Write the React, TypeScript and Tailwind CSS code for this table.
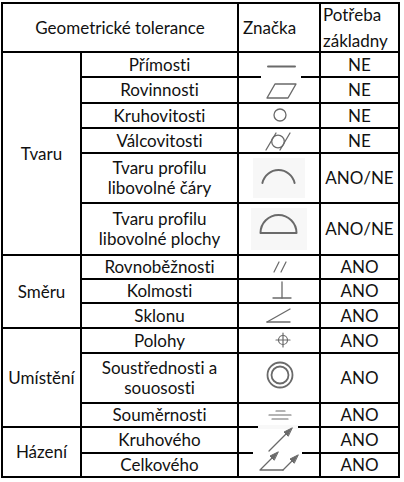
import type { ReactNode } from "react";

const stroke = "#6a6a6a";

const Cell = ({ children, className = "" }: { children?: ReactNode; className?: string }) => (
  <div className={`bg-white flex items-center justify-center text-center ${className}`}>{children}</div>
);

const Sym = ({ children, h, className = "" }: { children: ReactNode; h: number; className?: string }) => (
  <div className={`bg-white relative ${className}`}>
    <svg width={80} height={h} viewBox={`0 0 80 ${h}`} className="absolute left-0 top-0 overflow-visible" fill="none" stroke={stroke} strokeLinecap="round">
      {children}
    </svg>
  </div>
);

export default function App() {
  return (
    <div className="bg-white w-[404px] h-[482px] font-['Lato',_sans-serif] text-[17px] text-[#111] leading-[20px] [font-variant-ligatures:none]">
      <div className="ml-[1px] pt-[2px]">
        <div className="grid w-fit border-2 border-black bg-black gap-[2px] grid-cols-[77px_155px_80px_77px] grid-rows-[47px_23px_24px_23px_23px_48px_50px_22px_22px_23px_23px_48px_22px_24px_22px]">
          {/* header */}
          <Cell className="col-span-2">Geometrické tolerance</Cell>
          <Cell className="justify-start pl-[4px]">Značka</Cell>
          <Cell className="justify-start text-left pl-[2px] leading-[26px]">
            Potřeba
            <br />
            základny
          </Cell>

          {/* Tvaru */}
          <Cell className="row-span-6">Tvaru</Cell>
          <Cell>Přímosti</Cell>
          <Sym h={23}>
            <line x1={29} y1={13.5} x2={56} y2={13.5} strokeWidth={2} />
          </Sym>
          <Cell>NE</Cell>

          <Cell>Rovinnosti</Cell>
          <Sym h={24}>
            <rect x={22} y={-3} width={40} height={3} fill="#fff" stroke="none" />
            <polygon points="28,20 49,20 57,6 36,6" strokeWidth={1.4} strokeLinejoin="round" />
          </Sym>
          <Cell>NE</Cell>

          <Cell>Kruhovitosti</Cell>
          <Sym h={23}>
            <circle cx={41} cy={11} r={6} strokeWidth={1.3} />
          </Sym>
          <Cell>NE</Cell>

          <Cell>Válcovitosti</Cell>
          <Sym h={23}>
            <circle cx={39} cy={12.5} r={6.3} strokeWidth={1.3} />
            <line x1={27} y1={21} x2={37} y2={4} strokeWidth={1.3} />
            <line x1={41} y1={21} x2={51} y2={4} strokeWidth={1.3} />
          </Sym>
          <Cell>NE</Cell>

          <Cell>
            Tvaru profilu
            <br />
            libovolné čáry
          </Cell>
          <Sym h={48}>
            <rect x={14} y={4} width={52} height={40} fill="#f7f7f7" stroke="none" />
            <path d="M 23.4 29 A 16.5 16.5 0 0 1 55.6 29" strokeWidth={2} />
          </Sym>
          <Cell>ANO/NE</Cell>

          <Cell>
            Tvaru profilu
            <br />
            libovolné plochy
          </Cell>
          <Sym h={50}>
            <rect x={12} y={4} width={56} height={42} fill="#f7f7f7" stroke="none" />
            <path d="M 21.5 29 A 18 18 0 0 1 57.5 29 Z" strokeWidth={2} strokeLinejoin="round" />
          </Sym>
          <Cell>ANO/NE</Cell>

          {/* Směru */}
          <Cell className="row-span-3">Směru</Cell>
          <Cell>Rovnoběžnosti</Cell>
          <Sym h={22}>
            <line x1={35} y1={16} x2={40} y2={6} strokeWidth={1.2} />
            <line x1={42} y1={16} x2={47} y2={6} strokeWidth={1.2} />
          </Sym>
          <Cell>ANO</Cell>

          <Cell>Kolmosti</Cell>
          <Sym h={22}>
            <line x1={43} y1={2} x2={43} y2={18} strokeWidth={1.3} />
            <line x1={34} y1={18} x2={52} y2={18} strokeWidth={1.3} />
          </Sym>
          <Cell>ANO</Cell>

          <Cell>Sklonu</Cell>
          <Sym h={23}>
            <line x1={28} y1={18} x2={51} y2={18} strokeWidth={1.3} />
            <line x1={28} y1={18} x2={51} y2={5} strokeWidth={1.3} />
          </Sym>
          <Cell>ANO</Cell>

          {/* Umístění */}
          <Cell className="row-span-3">Umístění</Cell>
          <Cell>Polohy</Cell>
          <Sym h={23}>
            <circle cx={44} cy={11} r={4.5} strokeWidth={1.2} />
            <line x1={37} y1={11} x2={51} y2={11} strokeWidth={1.2} />
            <line x1={44} y1={4} x2={44} y2={18} strokeWidth={1.2} />
          </Sym>
          <Cell>ANO</Cell>

          <Cell>
            Soustřednosti a
            <br />
            souososti
          </Cell>
          <Sym h={48}>
            <circle cx={41} cy={21} r={12.5} strokeWidth={1.8} />
            <circle cx={41} cy={21} r={8.5} strokeWidth={1.8} />
          </Sym>
          <Cell>ANO</Cell>

          <Cell>Souměrnosti</Cell>
          <Sym h={22}>
            <line x1={37} y1={7} x2={46} y2={7} strokeWidth={1.2} />
            <line x1={30} y1={11} x2={52} y2={11} strokeWidth={1.2} />
            <line x1={33} y1={15} x2={49} y2={15} strokeWidth={1.2} />
          </Sym>
          <Cell>ANO</Cell>

          {/* Házení */}
          <Cell className="row-span-2">Házení</Cell>
          <Cell>Kruhového</Cell>
          <div className="bg-white relative row-span-2">
            <div className="absolute left-[19px] -top-[3px] w-[40px] h-[4px] bg-[#f8f8f8]" />
            <div className="absolute left-0 top-[24px] w-[14px] h-[2px] bg-black" />
            <div className="absolute right-0 top-[24px] w-[17px] h-[2px] bg-black" />
            <svg width={80} height={48} viewBox="0 0 80 48" className="absolute left-0 top-0 overflow-visible" fill="none" stroke={stroke} strokeLinecap="round" strokeLinejoin="round">
              <line x1={30} y1={23} x2={50} y2={3} strokeWidth={1.3} />
              <polygon points="53,0 45,4 49,8" fill={stroke} strokeWidth={1} />
              <polyline points="36,27 21,42 44,42" strokeWidth={1.3} />
              <line x1={44} y1={42} x2={56} y2={30} strokeWidth={1.3} />
              <polygon points="39,24 31,28 35,32" fill={stroke} strokeWidth={1} />
              <polygon points="59,27 51,31 55,35" fill={stroke} strokeWidth={1} />
            </svg>
          </div>
          <Cell>ANO</Cell>

          <Cell>Celkového</Cell>
          <Cell>ANO</Cell>
        </div>
      </div>
    </div>
  );
}
